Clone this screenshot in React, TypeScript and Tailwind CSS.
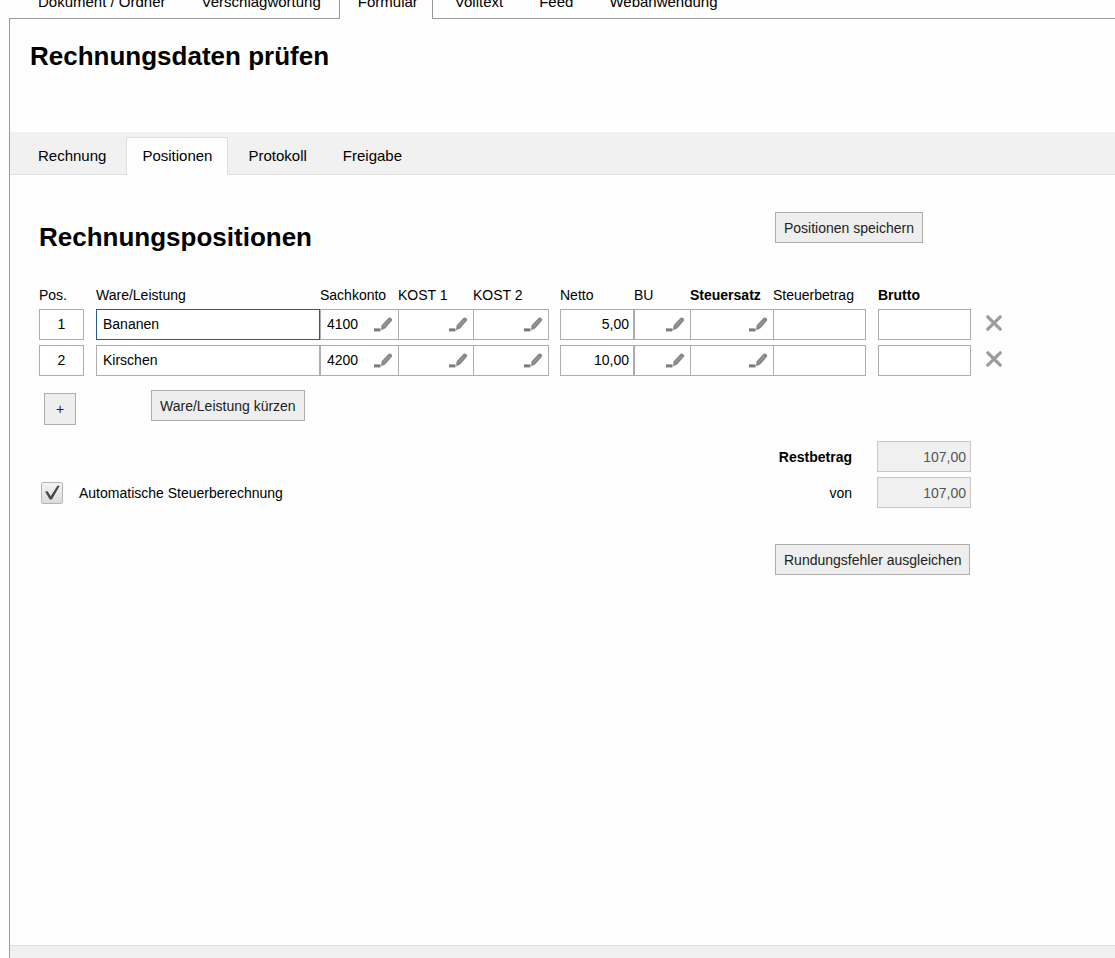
import { useState } from 'react';
import clsx from 'clsx';

interface Position {
  ware: string;
  sachkonto: string;
  netto: string;
}

interface FieldProps {
  label: string;
  value?: string;
  align?: 'left' | 'center' | 'right';
  lookup?: boolean;
  joined?: boolean;
  active?: boolean;
}

const mainTabs = [
  'Dokument / Ordner',
  'Verschlagwortung',
  'Formular',
  'Volltext',
  'Feed',
  'Webanwendung',
];

const formTabs = ['Rechnung', 'Positionen', 'Protokoll', 'Freigabe'];

const positions: Position[] = [
  { ware: 'Bananen', sachkonto: '4100', netto: '5,00' },
  { ware: 'Kirschen', sachkonto: '4200', netto: '10,00' },
];

const columns = [
  { title: 'Pos.', width: 'w-[57px]' },
  { title: 'Ware/Leistung', width: '' },
  { title: 'Sachkonto', width: 'w-[78px]' },
  { title: 'KOST 1', width: 'w-[75px]' },
  { title: 'KOST 2', width: 'w-[87px]' },
  { title: 'Netto', width: 'w-[74px]' },
  { title: 'BU', width: 'w-[56px]' },
  { title: 'Steuersatz', width: 'w-[83px]', bold: true },
  { title: 'Steuerbetrag', width: 'w-[105px]' },
  { title: 'Brutto', width: 'w-[93px]', bold: true },
];

function PencilIcon() {
  return (
    <svg width="20" height="18" viewBox="0 0 20 18" aria-hidden="true">
      <rect x="1" y="12.4" width="6.5" height="3" fill="#7a7a7a" />
      <path
        d="M8.1 14.2l.4-4.6 6.9-7.5c.7-.8 1.7-.8 2.4-.2l.8.7c.8.7.8 1.7.1 2.5l-6.6 7.5z"
        fill="#868686"
      />
      <path d="M10.6 10.6l4.8-5.5" stroke="#a8a8a8" strokeWidth="0.9" />
      <path d="M14.4 3.3l3.2 2.8" stroke="#a8a8a8" strokeWidth="0.6" />
    </svg>
  );
}

function CrossIcon() {
  return (
    <svg width="16" height="16" viewBox="0 0 16 16" aria-hidden="true">
      <path
        d="M1.8 1.8l12.4 12.4M14.2 1.8L1.8 14.2"
        stroke="#9c9c9c"
        strokeWidth="3.2"
        strokeLinecap="round"
      />
    </svg>
  );
}

function Field({
  label,
  value = '',
  align = 'left',
  lookup,
  joined,
  active,
}: FieldProps) {
  return (
    <div
      className={clsx(
        'flex h-[31px] items-center border bg-white',
        joined && 'border-r-0',
        active ? 'border-[#2b5a8a]' : 'border-[#adadad]'
      )}
    >
      <input
        aria-label={label}
        defaultValue={value}
        className={clsx(
          'h-full w-full min-w-0 flex-1 bg-transparent pb-0.5 outline-none',
          align === 'left' && 'pl-1.5',
          align === 'center' && 'text-center',
          align === 'right' && 'pr-1 text-right'
        )}
      />
      {lookup && (
        <button
          type="button"
          aria-label={`${label} auswählen`}
          className="mr-[5px]"
        >
          <PencilIcon />
        </button>
      )}
    </div>
  );
}

function FormButton({ children }: { children: string }) {
  return (
    <button
      type="button"
      className="h-[31px] border border-[#adadad] bg-[#eeeeee] px-2 text-[#222]"
    >
      {children}
    </button>
  );
}

function Total({ id, label, bold }: { id: string; label: string; bold?: boolean }) {
  return (
    <div className="flex items-center justify-end gap-[25px]">
      <label htmlFor={id} className={clsx(bold && 'font-bold')}>
        {label}
      </label>
      <input
        id={id}
        readOnly
        value="107,00"
        className="h-[31px] w-[94px] border border-[#c8c8c8] bg-[#f0f0f0] pr-1 text-right text-[#555] outline-none"
      />
    </div>
  );
}

export default function App() {
  const [autoTax, setAutoTax] = useState(true);

  return (
    <div className="flex min-h-screen flex-col bg-[#fefefe] pl-[9px] font-['Liberation_Sans',Arial,sans-serif] text-sm text-black">
      <nav className="flex h-[19px] overflow-hidden text-[15px] leading-4">
        <span className="w-[11px] border-b border-[#999]" />
        {mainTabs.map((tab) => (
          <div
            key={tab}
            className={clsx(
              'flex border-[#999]',
              tab === 'Formular' ? 'border-x' : 'border-b',
              tab === 'Volltext' && 'pl-1'
            )}
          >
            <button
              type="button"
              className={clsx(
                'flex items-end whitespace-nowrap',
                tab === 'Formular' ? 'pr-3.5 pb-[9px] pl-[18px]' : 'px-[18px] pb-2'
              )}
            >
              {tab}
            </button>
          </div>
        ))}
        <span className="flex-1 border-b border-[#999]" />
      </nav>

      <main className="flex flex-1 flex-col border-l border-[#999]">
        <h1 className="px-5 pt-[21px] pb-[60px] text-[26px] leading-8 font-bold">
          Rechnungsdaten prüfen
        </h1>

        <nav className="flex gap-1 border-b border-[#dedede] bg-[#f1f1f1] pt-[5px] pl-3 text-[15px] leading-5">
          {formTabs.map((tab) => (
            <button
              key={tab}
              type="button"
              className={clsx(
                '-mb-px h-[38px] border border-b-0 px-[15px] pb-0.5',
                tab === 'Positionen'
                  ? 'border-[#dedede] bg-[#fefefe]'
                  : 'border-transparent'
              )}
            >
              {tab}
            </button>
          ))}
        </nav>

        <form className="w-full max-w-[992px] flex-1 pt-[37px] pl-[29px]">
          <div className="grid grid-cols-[1fr_227px] items-start">
            <h2 className="mt-[9px] text-[26px] leading-8 font-bold">
              Rechnungspositionen
            </h2>
            <div>
              <FormButton>Positionen speichern</FormButton>
            </div>
          </div>

          <table className="mt-8 w-full table-fixed">
            <thead>
              <tr className="h-6 text-left align-top leading-5">
                {columns.map(({ title, width, bold }) => (
                  <th
                    key={title}
                    className={clsx(
                      'whitespace-nowrap',
                      width,
                      bold ? 'font-bold' : 'font-normal'
                    )}
                  >
                    {title}
                  </th>
                ))}
                <td className="w-[31px]" />
              </tr>
            </thead>
            <tbody>
              {positions.map((position, index) => (
                <tr key={position.ware} className="h-9 align-top">
                  <td className="pr-3">
                    <Field label="Pos." value={String(index + 1)} align="center" />
                  </td>
                  <td>
                    <Field
                      label="Ware/Leistung"
                      value={position.ware}
                      active={index === 0}
                    />
                  </td>
                  <td>
                    <Field label="Sachkonto" value={position.sachkonto} lookup joined />
                  </td>
                  <td>
                    <Field label="KOST 1" lookup joined />
                  </td>
                  <td className="pr-[11px]">
                    <Field label="KOST 2" lookup />
                  </td>
                  <td>
                    <Field label="Netto" value={position.netto} align="right" />
                  </td>
                  <td>
                    <Field label="BU" lookup joined />
                  </td>
                  <td>
                    <Field label="Steuersatz" lookup joined />
                  </td>
                  <td className="pr-3">
                    <Field label="Steuerbetrag" />
                  </td>
                  <td>
                    <Field label="Brutto" align="right" />
                  </td>
                  <td className="pt-1.5 pl-[15px]">
                    <button type="button" aria-label="Position löschen" className="block">
                      <CrossIcon />
                    </button>
                  </td>
                </tr>
              ))}
            </tbody>
          </table>

          <div className="flex items-start gap-[75px] pt-[9px] pl-[5px]">
            <button
              type="button"
              aria-label="Position hinzufügen"
              className="mt-[3px] h-8 w-8 border border-[#adadad] bg-[#eeeeee] text-[#222]"
            >
              +
            </button>
            <FormButton>Ware/Leistung kürzen</FormButton>
          </div>

          <div className="mt-4 flex items-end justify-between pr-[31px]">
            <label className="flex items-center gap-4 pb-1 pl-0.5">
              <span className="grid">
                <input
                  type="checkbox"
                  checked={autoTax}
                  onChange={(e) => setAutoTax(e.target.checked)}
                  className="peer col-start-1 row-start-1 h-[22px] w-[22px] appearance-none rounded-xs border border-[#b5b5b5] bg-linear-to-b from-[#f4f4f4] to-[#dcdcdc]"
                />
                <svg
                  className="pointer-events-none invisible col-start-1 row-start-1 peer-checked:visible"
                  width="22"
                  height="22"
                  viewBox="0 0 22 22"
                  aria-hidden="true"
                >
                  <path
                    d="M4 9.6l2.7-.4 3 5L16.4 3.8h2.4l-7.9 13.6H8.8z"
                    fill="#4a4a4a"
                  />
                </svg>
              </span>
              Automatische Steuerberechnung
            </label>
            <div className="flex flex-col gap-[5px]">
              <Total id="restbetrag" label="Restbetrag" bold />
              <Total id="von" label="von" />
            </div>
          </div>

          <div className="mt-9 grid grid-cols-[1fr_227px]">
            <div className="col-start-2">
              <FormButton>Rundungsfehler ausgleichen</FormButton>
            </div>
          </div>
        </form>

        <footer className="h-[13px] border-t border-[#dedede] bg-[#f0f0f0]" />
      </main>
    </div>
  );
}
